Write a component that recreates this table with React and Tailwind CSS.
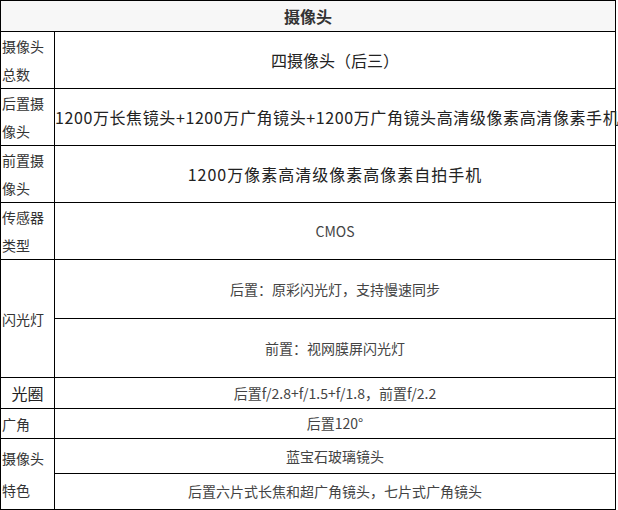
import React from 'react'

const font = "font-['Noto_Sans_CJK_SC','Noto_Sans',sans-serif]"

function Label({ children, className = '', rowSpan }) {
  return (
    <td
      rowSpan={rowSpan}
      className={`w-[54px] border border-black pl-[1px] align-middle text-[14px] leading-[28px] text-[#333] ${className}`}
    >
      {children}
    </td>
  )
}

function Value({ children, className = '' }) {
  return <td className={`border border-black text-center align-middle ${className}`}>{children}</td>
}

export default function App() {
  return (
    <div className={`w-[618px] bg-white ${font}`}>
      <table className="w-[616px] table-fixed border-collapse">
        <colgroup>
          <col className="w-[54px]" />
          <col />
        </colgroup>
        <tbody>
          <tr className="h-[31px]">
            <td colSpan={2} className="border border-black bg-[#f7f7f7] text-center text-[16px] font-bold text-[#333]">
              摄像头
            </td>
          </tr>
          <tr className="h-[57px]">
            <Label>
              摄像头
              <br />
              总数
            </Label>
            <Value className="text-[16px] text-[#222]">四摄像头（后三）</Value>
          </tr>
          <tr className="h-[57px]">
            <Label>
              后置摄
              <br />
              像头
            </Label>
            <Value className="whitespace-nowrap text-[16px] tracking-[0.6px] text-[#222]">
              1200万长焦镜头+1200万广角镜头+1200万广角镜头高清级像素高清像素手机
            </Value>
          </tr>
          <tr className="h-[57px]">
            <Label>
              前置摄
              <br />
              像头
            </Label>
            <Value className="text-[16px] tracking-[1px] text-[#222]">1200万像素高清级像素高像素自拍手机</Value>
          </tr>
          <tr className="h-[57px]">
            <Label>
              传感器
              <br />
              类型
            </Label>
            <Value className="text-[14px] text-[#444]">CMOS</Value>
          </tr>
          <tr className="h-[59px]">
            <Label rowSpan={2}>闪光灯</Label>
            <Value className="text-[14px] text-[#444]">后置：原彩闪光灯，支持慢速同步</Value>
          </tr>
          <tr className="h-[59px]">
            <Value className="text-[14px] text-[#444]">前置：视网膜屏闪光灯</Value>
          </tr>
          <tr className="h-[31px]">
            <Label className="!pl-0 text-center !text-[16px] !text-[#222]">光圈</Label>
            <Value className="text-[14px] text-[#444]">后置f/2.8+f/1.5+f/1.8，前置f/2.2</Value>
          </tr>
          <tr className="h-[30px]">
            <Label>广角</Label>
            <Value className="text-[14px] text-[#444]">后置120°</Value>
          </tr>
          <tr className="h-[35px]">
            <Label rowSpan={2} className="!leading-[32px]">
              摄像头
              <br />
              特色
            </Label>
            <Value className="text-[14px] text-[#444]">蓝宝石玻璃镜头</Value>
          </tr>
          <tr className="h-[36px]">
            <Value className="text-[14px] text-[#444]">后置六片式长焦和超广角镜头，七片式广角镜头</Value>
          </tr>
        </tbody>
      </table>
    </div>
  )
}
